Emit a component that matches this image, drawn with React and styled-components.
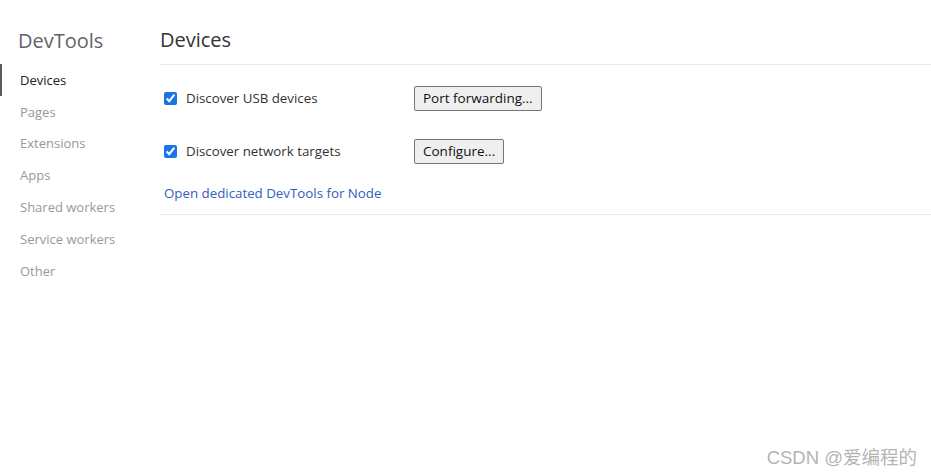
import styled, { createGlobalStyle } from 'styled-components';

const Global = createGlobalStyle`
	html, body {
		margin: 0;
		padding: 0;
		background: #fff;
		font-family: 'Open Sans', 'Noto Sans', sans-serif;
	}
`;

const Page = styled.div`
	display: flex;
	flex-direction: row;
	width: 931px;
	height: 476px;
	position: relative;
	overflow: hidden;
`;

const Sidebar = styled.nav`
	width: 160px;
	flex-shrink: 0;
	display: flex;
	flex-direction: column;
`;

const Brand = styled.h1`
	margin: 0;
	height: 64px;
	display: flex;
	align-items: flex-end;
	padding: 0 0 10px 18px;
	box-sizing: border-box;
	font-size: 20px;
	line-height: 27px;
	font-weight: 400;
	color: #5f6368;
`;

const NavItem = styled.div`
	height: 31.8px;
	display: flex;
	align-items: center;
	padding-left: 18px;
	border-left: 2px solid ${(p) => (p.$active ? '#5a5a5a' : 'transparent')};
	font-size: 13px;
	color: ${(p) => (p.$active ? '#202124' : '#999')};
`;

const Main = styled.main`
	flex: 1;
	display: flex;
	flex-direction: column;
`;

const Header = styled.h2`
	margin: 0;
	height: 65px;
	display: flex;
	align-items: flex-end;
	padding-bottom: 11px;
	box-sizing: border-box;
	border-bottom: 1px solid #ebebeb;
	font-size: 20px;
	line-height: 27px;
	font-weight: 400;
	color: #333;
`;

const Section = styled.section`
	padding: 17px 0 11px 4px;
	border-bottom: 1px solid #ebebeb;
	display: flex;
	flex-direction: column;
`;

const Row = styled.div`
	display: flex;
	align-items: center;
	height: 32px;
	margin-bottom: ${(p) => p.$gap || 0}px;
`;

const Label = styled.label`
	width: 250px;
	display: flex;
	align-items: center;
	font-size: 13.3px;
	color: #333;

	input {
		margin: 0 9px 0 0;
		width: 13px;
		height: 13px;
		accent-color: #1a73e8;
	}
`;

const Button = styled.button`
	height: 25px;
	padding: 0 8px;
	background: #efefef;
	border: 1px solid #767676;
	border-radius: 2px;
	font-family: inherit;
	font-size: 13.5px;
	color: #111;
`;

const Link = styled.a`
	height: 20px;
	display: flex;
	align-items: center;
	margin-top: 1px;
	font-size: 13.3px;
	color: #3060c0;
	text-decoration: none;
`;

const Watermark = styled.div`
	position: absolute;
	right: 14px;
	bottom: 7px;
	font-family: 'Liberation Sans', 'Noto Sans CJK SC', sans-serif;
	font-size: 18.5px;
	color: #b4b4b4;
`;

const navItems = ['Devices', 'Pages', 'Extensions', 'Apps', 'Shared workers', 'Service workers', 'Other'];

export default function App() {
	return (
		<Page>
			<Global />
			<Sidebar>
				<Brand>DevTools</Brand>
				{navItems.map((n, i) => (
					<NavItem key={n} $active={i === 0}>
						{n}
					</NavItem>
				))}
			</Sidebar>
			<Main>
				<Header>Devices</Header>
				<Section>
					<Row $gap={21}>
						<Label>
							<input type="checkbox" defaultChecked />
							Discover USB devices
						</Label>
						<Button>Port forwarding...</Button>
					</Row>
					<Row $gap={15}>
						<Label>
							<input type="checkbox" defaultChecked />
							Discover network targets
						</Label>
						<Button>Configure...</Button>
					</Row>
					<Link href="#">Open dedicated DevTools for Node</Link>
				</Section>
			</Main>
			<Watermark>CSDN @爱编程的</Watermark>
		</Page>
	);
}
